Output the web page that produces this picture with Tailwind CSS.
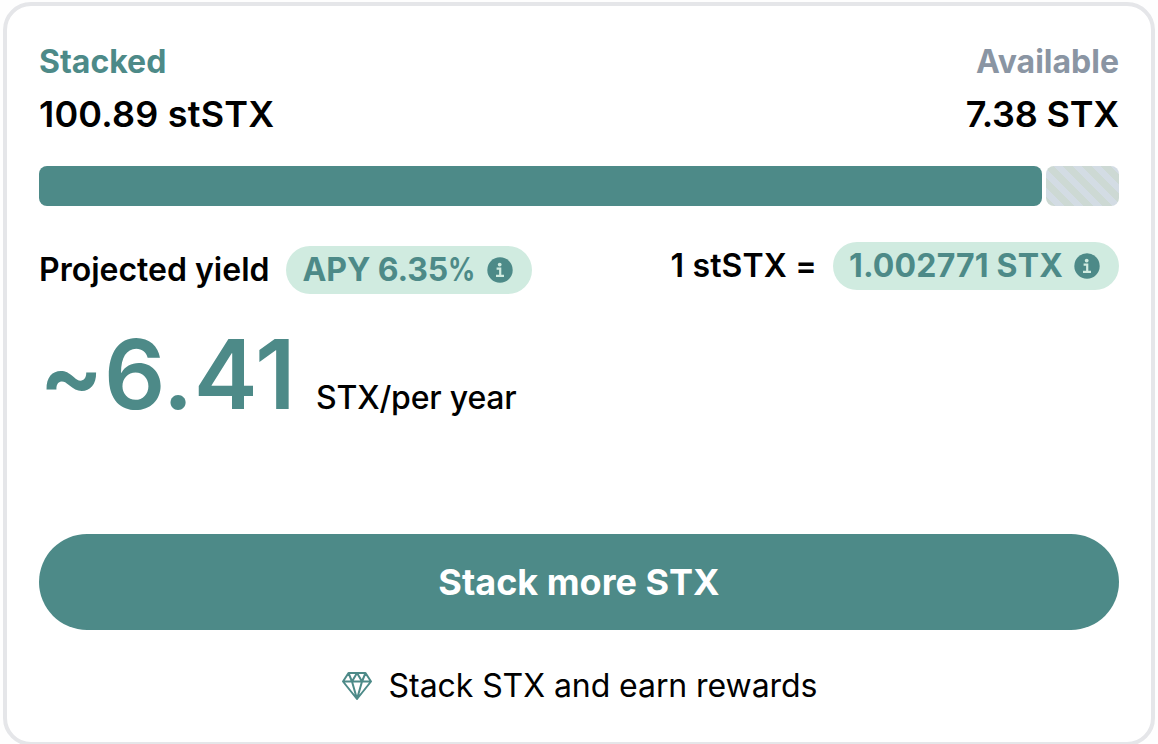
<!DOCTYPE html>
<html lang="en">
<head>
  <meta charset="UTF-8" />
  <meta name="viewport" content="width=device-width, initial-scale=1.0" />
  <title>Stack STX</title>
  <script src="https://cdn.jsdelivr.net/npm/@tailwindcss/browser@4"></script>
</head>
<body class="bg-[#fefefe] text-black font-['Inter',sans-serif] h-[744px] overflow-hidden pt-[2px] pl-[3px] pr-[3px]">
  <main class="h-[744px] border-4 border-[#e5e6e9] rounded-[28px] bg-white p-8 flex flex-col">
    <div class="flex justify-between">
      <div>
        <p class="text-[32px] leading-[48px] font-bold text-[#4d8a88]">Stacked</p>
        <p class="text-4xl leading-[56px] font-semibold tracking-[0.2px]">100.89 stSTX</p>
      </div>
      <div class="text-right">
        <p class="text-[32px] leading-[48px] font-bold text-[#8a95a3]">Available</p>
        <p class="text-4xl leading-[56px] font-semibold tracking-[-0.2px]">7.38 STX</p>
      </div>
    </div>

    <div class="mt-6 flex gap-1 h-10">
      <div class="flex-1 rounded-lg bg-[#4d8a88]"></div>
      <div class="w-[73px] rounded-lg bg-[repeating-linear-gradient(45deg,#cdd9d4_0px,#cdd9d4_6.7px,#d3dce4_6.7px,#d3dce4_13.4px)]"></div>
    </div>

    <div class="mt-9 flex justify-between items-start">
      <div class="mt-1">
        <div class="flex items-center gap-[17px]">
          <span class="text-[32px] leading-[48px] font-semibold">Projected yield</span>
          <span class="h-12 rounded-full bg-[#d0ebe0] text-[#4d8a88] pl-4 pr-[19px] flex items-center gap-[13px] text-[32px] leading-[48px] font-bold">
            <span class="flex tracking-[-0.1px]">APY 6.35<span class="inline-block w-[26px] origin-left scale-x-[0.84] font-bold">%</span></span>
            <svg class="size-[26px]" viewBox="0 0 26 26">
              <circle cx="13" cy="13" r="12.7" fill="#4d8a88" />
              <circle cx="12.7" cy="7.6" r="1.9" fill="#d0ebe0" />
              <path d="M9.6 11.6h3.6v7M9 18.9h8" fill="none" stroke="#d0ebe0" stroke-width="2.2" />
            </svg>
          </span>
        </div>
        <div class="mt-8 flex items-baseline gap-5">
          <span class="text-8xl leading-[96px] font-semibold tracking-[0.4px] text-[#4d8a88]">~6.41</span>
          <span class="text-[32px] font-medium tracking-[-0.2px]">STX/per year</span>
        </div>
      </div>
      <div class="flex items-center gap-4">
        <span class="text-[32px] leading-[48px] font-semibold tracking-[0.15px]">1 stSTX =</span>
        <span class="h-12 rounded-full bg-[#d0ebe0] text-[#4d8a88] pl-4 pr-[19px] flex items-center gap-[11px] text-[32px] leading-[48px] font-bold tracking-[0.17px]">
          1.002771 STX
          <svg class="size-[26px]" viewBox="0 0 26 26">
            <circle cx="13" cy="13" r="12.7" fill="#4d8a88" />
            <circle cx="12.7" cy="7.6" r="1.9" fill="#d0ebe0" />
            <path d="M9.6 11.6h3.6v7M9 18.9h8" fill="none" stroke="#d0ebe0" stroke-width="2.2" />
          </svg>
        </span>
      </div>
    </div>

    <button class="mt-auto h-24 shrink-0 rounded-full bg-[#4d8a88] text-white text-4xl font-bold">Stack more STX</button>

    <div class="mt-8 flex items-center justify-center gap-4">
      <svg class="w-8 h-[30px]" viewBox="0 0 32 30" fill="none" stroke="#4d8a88" stroke-width="2" stroke-linejoin="round">
        <path d="M7.500 2h17L30 10.500 16 28 2 10.500zM2 10.500h28M7.500 2l3.500 8.500L16 2l5 8.500L24.500 2M11 10.500 16 28l5-17.500" />
      </svg>
      <span class="text-[32px] leading-[48px] tracking-[-0.07px]">Stack STX and earn rewards</span>
    </div>
  </main>
</body>
</html>
